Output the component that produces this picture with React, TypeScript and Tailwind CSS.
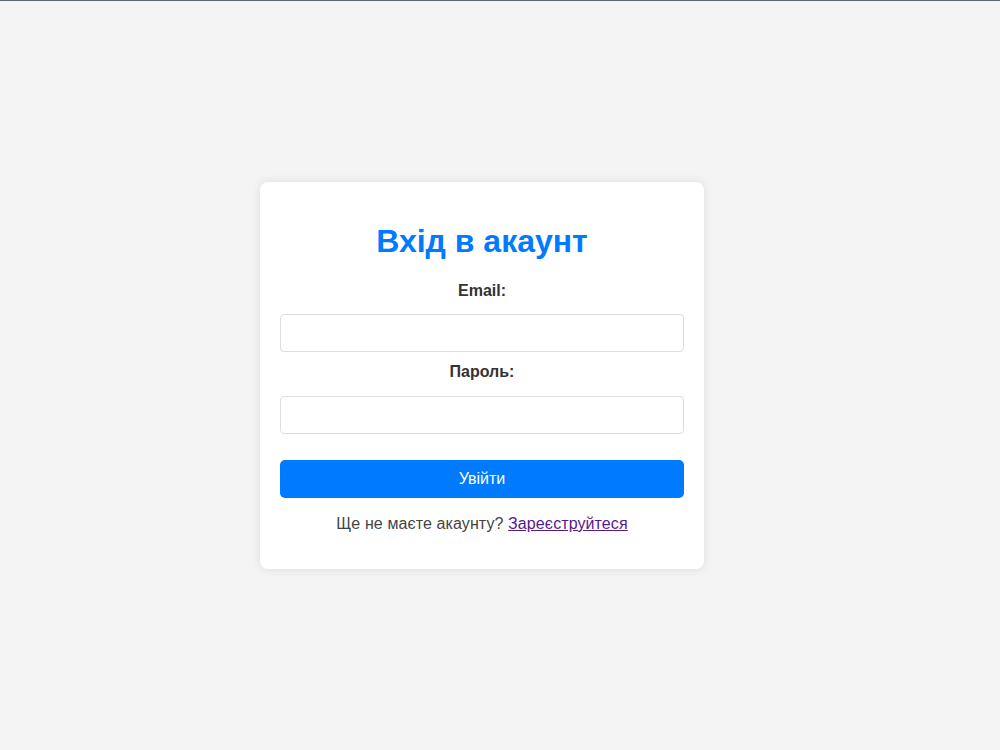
import React from 'react';

const App: React.FC = () => {
    return (
        <div className="min-h-screen w-full bg-[#f4f4f4] border-t border-[#5a6872] flex items-center justify-center pr-[36px] font-['Liberation_Sans',Arial,sans-serif]">
            {/* Login card */}
            <div className="w-[444px] bg-white rounded-lg p-5 shadow-[0_0_10px_rgba(0,0,0,0.1)] flex flex-col">
                <h1 className="text-[32px] leading-[37px] font-bold text-[#007bff] text-center mt-[21px] mb-[22px]">
                    Вхід в акаунт
                </h1>

                <label className="block text-center text-base leading-[18px] font-bold text-[#333] mb-[14px]">
                    Email:
                </label>
                <input
                    type="email"
                    className="h-[38px] w-full rounded border border-[#ddd] bg-white px-2.5 text-base outline-none mb-[11px]"
                />

                <label className="block text-center text-base leading-[18px] font-bold text-[#333] mb-[15px]">
                    Пароль:
                </label>
                <input
                    type="password"
                    className="h-[38px] w-full rounded border border-[#ddd] bg-white px-2.5 text-base outline-none mb-[26px]"
                />

                <button className="h-[38px] w-full rounded-[5px] bg-[#007bff] text-white text-base leading-[18px] mb-[17px]">
                    Увійти
                </button>

                <p className="text-center text-base leading-[18px] tracking-[0.1px] text-[#444] mb-[16px]">
                    Ще не маєте акаунту?{' '}
                    <a href="#" className="text-[#551a8b] underline">
                        Зареєструйтеся
                    </a>
                </p>
            </div>
        </div>
    );
};

export default App;
